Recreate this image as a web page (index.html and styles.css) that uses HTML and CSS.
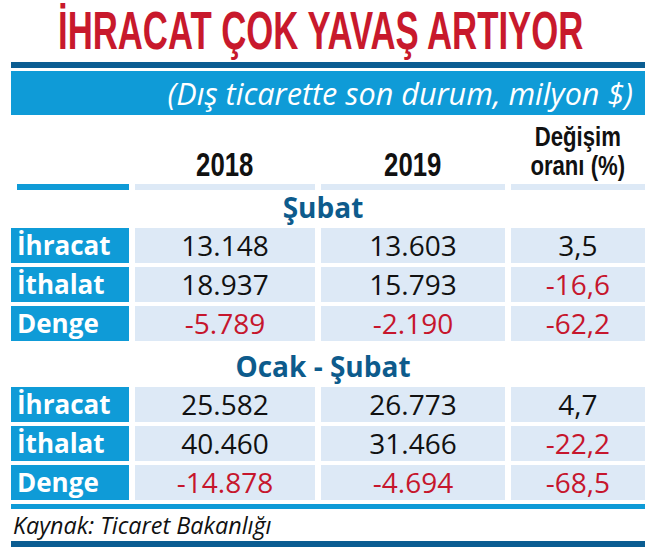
FILE: index.html
```html
<!DOCTYPE html>
<html lang="tr">
<head>
<meta charset="utf-8">
<title>İhracat çok yavaş artıyor</title>
<link rel="stylesheet" href="styles.css">
</head>
<body>
<div class="page">
  <h1 class="title"><span class="title-text">İHRACAT ÇOK YAVAŞ ARTIYOR</span></h1>
  <div class="bar-dark"></div>
  <div class="subtitle">(Dış ticarette son durum, milyon $)</div>

  <div class="row head">
    <div></div>
    <div class="hcell"><span class="yr">2018</span></div>
    <div class="hcell"><span class="yr">2019</span></div>
    <div class="hcell"><span class="chg">Değişim<br>oranı (%)</span></div>
  </div>
  <div class="row underline">
    <div class="ul ul-blue"></div>
    <div class="ul"></div>
    <div class="ul"></div>
    <div class="ul"></div>
  </div>

  <div class="section">Şubat</div>
  <div class="rows">
    <div class="row data">
      <div class="label">İhracat</div>
      <div class="cell">13.148</div>
      <div class="cell">13.603</div>
      <div class="cell">3,5</div>
    </div>
    <div class="row data">
      <div class="label">İthalat</div>
      <div class="cell">18.937</div>
      <div class="cell">15.793</div>
      <div class="cell neg">-16,6</div>
    </div>
    <div class="row data">
      <div class="label">Denge</div>
      <div class="cell neg">-5.789</div>
      <div class="cell neg">-2.190</div>
      <div class="cell neg">-62,2</div>
    </div>
  </div>

  <div class="section section-2">Ocak - Şubat</div>
  <div class="rows">
    <div class="row data">
      <div class="label">İhracat</div>
      <div class="cell">25.582</div>
      <div class="cell">26.773</div>
      <div class="cell">4,7</div>
    </div>
    <div class="row data">
      <div class="label">İthalat</div>
      <div class="cell">40.460</div>
      <div class="cell">31.466</div>
      <div class="cell neg">-22,2</div>
    </div>
    <div class="row data">
      <div class="label">Denge</div>
      <div class="cell neg">-14.878</div>
      <div class="cell neg">-4.694</div>
      <div class="cell neg">-68,5</div>
    </div>
  </div>

  <div class="bar-blue"></div>
  <div class="source">Kaynak: Ticaret Bakanlığı</div>
  <div class="bar-dark bar-bottom"></div>
</div>
</body>
</html>
```

FILE: styles.css
```css
html, body {
  margin: 0;
  padding: 0;
  background: #ffffff;
}

.page {
  width: 634px;
  margin-left: 11px;
  display: flex;
  flex-direction: column;
  font-family: "Open Sans", "Noto Sans", sans-serif;
}

.title {
  margin: 0;
  height: 62px;
  padding-left: 47px;
  overflow: hidden;
  font-family: "Liberation Sans", Arial, sans-serif;
  font-weight: bold;
  font-size: 53px;
  line-height: 62px;
  color: #c8192c;
  white-space: nowrap;
}

.title-text {
  display: inline-block;
  transform: scaleX(0.655);
  transform-origin: left center;
}

.bar-dark {
  height: 6px;
  background: #0b5d92;
}

.subtitle {
  margin-top: 3px;
  height: 44px;
  background: #0f9bd7;
  color: #ffffff;
  font-style: italic;
  font-size: 30.6px;
  line-height: 44px;
  text-align: right;
  padding-right: 12px;
  white-space: nowrap;
}

.row {
  display: grid;
  grid-template-columns: 118px 180px 184px 134px;
  column-gap: 6px;
}

.head {
  height: 69px;
  align-items: end;
  padding-bottom: 3px;
  box-sizing: border-box;
  font-family: "Liberation Sans", Arial, sans-serif;
  font-weight: bold;
  color: #111111;
}

.hcell {
  text-align: center;
}

.yr {
  display: inline-block;
  font-size: 33px;
  line-height: 29px;
  padding-bottom: 2px;
  transform: scaleX(0.78);
}

.chg {
  display: inline-block;
  font-size: 27px;
  line-height: 29px;
  transform: scaleX(0.82);
}

.underline {
  height: 6px;
}

.ul {
  background: #dde9f6;
}

.ul-blue {
  background: #0f9bd7;
  margin-left: 6px;
}

.section {
  height: 38px;
  box-sizing: border-box;
  padding-bottom: 4px;
  padding-right: 10px;
  line-height: 34px;
  text-align: center;
  font-weight: bold;
  font-size: 28px;
  color: #0d5b8c;
}

.section-2 {
  margin-top: 8px;
}

.rows {
  display: flex;
  flex-direction: column;
  row-gap: 4px;
}

.data {
  height: 35px;
}

.label {
  background: #0f9bd7;
  color: #ffffff;
  font-weight: bold;
  font-size: 26px;
  line-height: 35px;
  padding-left: 6px;
  white-space: nowrap;
}

.cell {
  background: #dde9f6;
  color: #111111;
  font-size: 28px;
  line-height: 35px;
  text-align: center;
}

.neg {
  color: #c6162d;
}

.bar-blue {
  margin-top: 4px;
  height: 5px;
  background: #0f9bd7;
}

.source {
  height: 32px;
  padding-left: 2px;
  font-style: italic;
  font-size: 23.4px;
  line-height: 32px;
  color: #111111;
}

.bar-bottom {
  height: 6px;
}
```
